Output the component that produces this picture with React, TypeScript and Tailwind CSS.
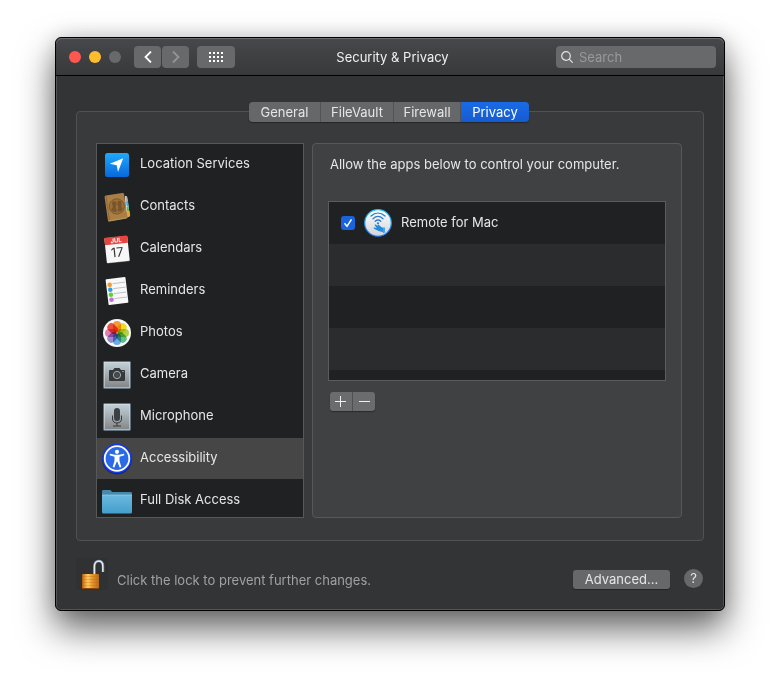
import { useState } from "react";
import type { ReactNode } from "react";

const tabs = [
  { label: "General", width: "w-[72px]" },
  { label: "FileVault", width: "w-[73px]" },
  { label: "Firewall", width: "w-[67px]" },
  { label: "Privacy", width: "w-[68px]" },
];

const petals = [
  { angle: 0, color: "#f9a03c" },
  { angle: 45, color: "#f5e12a" },
  { angle: 90, color: "#b4d84a" },
  { angle: 135, color: "#5fc48d" },
  { angle: 180, color: "#6fb0ea" },
  { angle: 225, color: "#9c8fd6" },
  { angle: 270, color: "#e583bb" },
  { angle: 315, color: "#f4523f" },
];

function Icon({ children }: { children: ReactNode }) {
  return (
    <svg viewBox="0 0 32 32" className="size-8 shrink-0" aria-hidden="true">
      {children}
    </svg>
  );
}

function LocationIcon() {
  return (
    <Icon>
      <defs>
        <linearGradient id="location" x2="0" y2="1">
          <stop stopColor="#20a9fc" />
          <stop offset="1" stopColor="#0868dc" />
        </linearGradient>
      </defs>
      <rect x="4" y="4" width="24" height="24" rx="2.5" fill="url(#location)" />
      <path d="M22.2 9.3 17 23l-1.300-6.800-6.900-1.500z" fill="#fff" />
    </Icon>
  );
}

function ContactsIcon() {
  return (
    <Icon>
      <path d="m24 5 2 .4L29 25l-4 2z" fill="#f2f2ee" />
      <path d="m24.5 6 1.6-.1.6 4-1.8.6z" fill="#aab4bd" />
      <path d="m25 10.5 2-.4.7 5-2 .5z" fill="#45a9e8" />
      <path d="m25.5 15.7 2-.5.7 5-2 .6z" fill="#56bd5a" />
      <path d="m25.5 21 2.8-.7.9 4.8-3.4 1.2z" fill="#eda32a" />
      <path d="M3.6 6.2c0-.8.4-1.4 1.2-1.6L21.2 2c1-.1 1.7.3 1.9 1.2L26.5 26c.1.8-.3 1.5-1.1 1.6L8.6 30.600c-.9.1-1.5-.4-1.700-1.300z" fill="#a97f46" />
      <path d="m5 5 3.600 25" stroke="#8b6532" strokeWidth=".8" />
      <path d="m7.500 30 17.800-3" stroke="#c39a5c" strokeWidth=".8" />
      <circle cx="15.800" cy="15.400" r="7.600" fill="#9a703a" stroke="#7d592b" strokeWidth="1" />
      <path d="M12 10.500c2.200-.9 3.600.5 3.400 2.700-.1 1.500-.8 2-.7 3 .2 1.400 1.500 1.800 1 3.700-.2 1-2 1.200-4.300.3-1.300-.6-1.600-2-.4-3 .9-.7 1-1.300.5-2.500-.5-1.400-.9-3.500.5-4.200zM17.500 10c2-.6 3.300.5 3.200 2.500 0 1.400-.6 2-.4 2.800.2 1.200 1.400 1.600 1.100 3-.2 1-1.700 2-3.900 2.200-1 0-1.100-1.600-.4-2.800.5-1 .2-1.900-.3-3.200-.7-1.700-.7-4 .7-4.500z" fill="#7a552a" />
    </Icon>
  );
}

function CalendarIcon() {
  return (
    <Icon>
      <g transform="rotate(-6 16 16)">
        <path d="M5 27h22v2.500H5z" fill="#777" />
        <rect x="4.500" y="4" width="23" height="25" rx="1" fill="#f7f7f7" />
        <path d="M5.500 3.500h21a1 1 0 0 1 1 1V11h-23V4.500a1 1 0 0 1 1-1z" fill="#e6443f" />
        <text x="16" y="9.500" textAnchor="middle" fill="#fff" className="font-['Inter'] text-[6px] font-bold">JUL</text>
        <text x="16" y="24" textAnchor="middle" fill="#333" className="font-['Inter'] text-[13px]">17</text>
      </g>
    </Icon>
  );
}

function RemindersIcon() {
  return (
    <Icon>
      <g transform="rotate(-7 16 16)">
        <rect x="6" y="3" width="20" height="26" rx="1" fill="#f8f8f8" />
        <path d="M12.500 8.200H25M12.500 13.200H25M12.500 18.200H25M12.500 23.200H25" stroke="#b8b8b8" strokeWidth=".8" />
        <circle cx="9.500" cy="9" r="2.300" fill="#f79a28" />
        <circle cx="9.500" cy="14" r="2.300" fill="#2c9fe8" />
        <circle cx="9.500" cy="19" r="2.300" fill="#5fcf3e" />
        <circle cx="9.500" cy="24" r="2.300" fill="#bd74d4" />
      </g>
    </Icon>
  );
}

function PhotosIcon() {
  return (
    <Icon>
      <circle cx="16" cy="16" r="14" fill="#f8f8f8" />
      {petals.map((p) => (
        <rect
          key={p.angle}
          x="12"
          y="4"
          width="8"
          height="11.500"
          rx="4"
          fill={p.color}
          transform={`rotate(${p.angle} 16 16)`}
          className="mix-blend-multiply"
        />
      ))}
    </Icon>
  );
}

function SteelTile({ id, children }: { id: string; children: ReactNode }) {
  return (
    <Icon>
      <defs>
        <linearGradient id={id} x2="0" y2="1">
          <stop stopColor="#c3d3db" />
          <stop offset="1" stopColor="#828384" />
        </linearGradient>
      </defs>
      <rect x="2.500" y="2.500" width="27" height="27" rx="1" fill={`url(#${id})`} stroke="#607280" />
      <rect x="3.500" y="3.500" width="25" height="25" fill="none" stroke="#dce4e8" strokeOpacity=".5" />
      {children}
    </Icon>
  );
}

function CameraIcon() {
  return (
    <SteelTile id="camera">
      <path d="M9 11h3l1.500-2h5l1.500 2h3a1 1 0 0 1 1 1v9a1 1 0 0 1-1 1H9a1 1 0 0 1-1-1v-9a1 1 0 0 1 1-1z" fill="#35393b" />
      <circle cx="16" cy="16" r="3.600" fill="#3b3f41" stroke="#a9b0b3" strokeWidth="1" />
      <circle cx="16" cy="16" r="2" fill="#484d50" />
      <path d="M21 12.500h2" stroke="#9ba3a7" strokeWidth=".8" />
    </SteelTile>
  );
}

function MicrophoneIcon() {
  return (
    <SteelTile id="microphone">
      <rect x="13" y="7" width="6" height="13" rx="3" fill="#3d4042" />
      <path d="M11.500 14.500V18c0 2.500 2 4 4.500 4s4.500-1.500 4.500-4v-3.500M16 22v3M12 25h8" fill="none" stroke="#35383a" strokeWidth="1" />
    </SteelTile>
  );
}

function AccessibilityIcon() {
  return (
    <Icon>
      <circle cx="16" cy="16.500" r="15" fill="#0c1a70" opacity=".7" />
      <circle cx="16" cy="15.500" r="14.700" fill="#1238ee" />
      <circle cx="16" cy="15.500" r="12.300" fill="#2a6ae6" stroke="#fff" strokeWidth="1.800" />
      <circle cx="16" cy="8.800" r="2.100" fill="#fff" />
      <path d="m9 10.800 4.700 1h4.600l4.700-1 .4 1.500-4.900 1.500v4l1.800 6.100-1.600.5-2.500-5.800h-.4l-2.500 5.800-1.600-.5 1.800-6.100v-4l-4.900-1.500z" fill="#fff" />
    </Icon>
  );
}

function FolderIcon() {
  return (
    <Icon>
      <defs>
        <linearGradient id="folder" x2="0" y2="1">
          <stop stopColor="#6bb9df" />
          <stop offset="1" stopColor="#449ecb" />
        </linearGradient>
      </defs>
      <path d="M1 6.500C1 5.500 1.500 5 2.500 5h6.200c1.600 0 1.600 2 3.300 2h17.500c1 0 1.500.5 1.500 1.500V12H1z" fill="#4689aa" />
      <path d="M1 10h30v17a1.500 1.500 0 0 1-1.500 1.500h-27A1.500 1.500 0 0 1 1 27z" fill="url(#folder)" />
      <path d="M1 10h30" stroke="#91d3ee" strokeWidth=".7" />
    </Icon>
  );
}

function RemoteIcon() {
  return (
    <Icon>
      <defs>
        <linearGradient id="remote-ring" x2="0" y2="1">
          <stop stopColor="#20c5f0" />
          <stop offset="1" stopColor="#1768e4" />
        </linearGradient>
        <linearGradient id="remote-face" x2="0" y2="1">
          <stop stopColor="#fff" />
          <stop offset="1" stopColor="#d0d3d8" />
        </linearGradient>
      </defs>
      <circle cx="16" cy="16" r="13.300" fill="url(#remote-face)" stroke="url(#remote-ring)" strokeWidth="1.200" />
      <path d="M9 9c4.300-3.800 9.700-3.800 14 0M11 11.700c3.100-2.800 6.900-2.800 10 0M13.200 14.200c1.800-1.600 3.800-1.600 5.600 0" fill="none" stroke="#287fd2" strokeWidth="1.300" strokeLinecap="round" />
      <circle cx="16" cy="16.300" r="1.100" fill="#287fd2" />
      <path d="m16.200 17.600 3.800 3 1.200.2 1 2.500v3l-1.800-1.200-3.800-1-4.600-2.400c-.8-.5-.2-1.300.6-1.100l2.200.5-2-2.600c-.3-1 .5-1.300 1.200-.7l1.500 1z" fill="#258adb" />
      <path d="M21 20.500h2V26l-2-1z" fill="#46a5e4" />
    </Icon>
  );
}

function LockIcon() {
  return (
    <svg viewBox="0 0 32 32" className="size-8 shrink-0" aria-hidden="true">
      <defs>
        <linearGradient id="brass">
          <stop stopColor="#a8570f" />
          <stop offset=".12" stopColor="#e08a1f" />
          <stop offset=".35" stopColor="#ffcb62" />
          <stop offset=".6" stopColor="#e8962b" />
          <stop offset="1" stopColor="#b76a17" />
        </linearGradient>
      </defs>
      <rect width="32" height="32" rx="4" fill="#303133" />
      <path d="M18.500 16V8.500c0-3.300 1.700-5.500 4.300-5.500s4.200 2.200 4.200 5.500V14" fill="none" stroke="#8297a5" strokeWidth="2.400" />
      <path d="M18.300 16V8.500c0-3.300 1.900-5.300 4.500-5.300s4 2 4 5.300V14" fill="none" stroke="#edf3f6" strokeWidth="1.200" />
      <rect x="6" y="16" width="17" height="15" rx="1" fill="url(#brass)" />
      <path d="M6 18.500h17M6 21.500h17M6 24.500h17M6 27.500h17" stroke="#a75d13" strokeOpacity=".35" strokeWidth=".8" />
      <path d="M6 30.500h17" stroke="#8a450c" />
    </svg>
  );
}

const services = [
  { label: "Location Services", icon: <LocationIcon /> },
  { label: "Contacts", icon: <ContactsIcon /> },
  { label: "Calendars", icon: <CalendarIcon /> },
  { label: "Reminders", icon: <RemindersIcon /> },
  { label: "Photos", icon: <PhotosIcon /> },
  { label: "Camera", icon: <CameraIcon /> },
  { label: "Microphone", icon: <MicrophoneIcon /> },
  { label: "Accessibility", icon: <AccessibilityIcon /> },
  { label: "Full Disk Access", icon: <FolderIcon /> },
];

function TitleBar() {
  return (
    <header className="grid h-[38px] grid-cols-[1fr_auto_1fr] items-start rounded-t-md border-b border-black bg-linear-to-b from-[#47484b] to-[#38393b] pt-2 pr-2 pl-[13px] shadow-[inset_0_1px_#6b6c6e]">
      <div className="flex h-[22px] items-center">
        <div className="flex gap-2">
          <button type="button" aria-label="Close" className="size-3 rounded-full bg-[#ff5750]" />
          <button type="button" aria-label="Minimize" className="size-3 rounded-full bg-[#ffbd2e]" />
          <button type="button" aria-label="Zoom" disabled className="size-3 rounded-full bg-[#69696b]" />
        </div>
        <div className="ml-[13px] flex gap-px">
          <button type="button" aria-label="Back" className="grid h-[22px] w-[27px] place-items-center rounded-sm bg-[#68696b] text-white">
            <svg viewBox="0 0 8 12" className="h-3 w-2" fill="none" stroke="currentColor" strokeWidth="1.800">
              <path d="M7 .5 1.500 6 7 11.500" />
            </svg>
          </button>
          <button type="button" aria-label="Forward" disabled className="grid h-[22px] w-[27px] place-items-center rounded-sm bg-[#68696b] text-[#949597]">
            <svg viewBox="0 0 8 12" className="h-3 w-2" fill="none" stroke="currentColor" strokeWidth="1.800">
              <path d="M1 .5 6.500 6 1 11.500" />
            </svg>
          </button>
        </div>
        <button type="button" aria-label="Show All" className="ml-2 grid h-[22px] w-[38px] place-items-center rounded-sm bg-[#68696b]">
          <svg viewBox="0 0 14 10" className="h-2.5 w-3.5" fill="#fff">
            {[0, 4, 8].map((y) =>
              [0, 4, 8, 12].map((x) => <rect key={`${x}-${y}`} x={x} y={y} width="2" height="2" />),
            )}
          </svg>
        </button>
      </div>
      <h1 className="leading-[22px] text-[#f0f0f0]">Security &amp; Privacy</h1>
      <div className="flex h-[22px] w-40 items-center gap-1.5 justify-self-end rounded-sm bg-[#68696b] pl-[5px]">
        <label htmlFor="search" aria-label="Search">
          <svg viewBox="0 0 12 12" className="size-3 shrink-0" fill="none" stroke="#e4e4e5" strokeWidth="1.200">
            <circle cx="5" cy="5" r="4.300" />
            <path d="m8.200 8.200 3.500 3.500" />
          </svg>
        </label>
        <input
          id="search"
          type="search"
          placeholder="Search"
          className="h-5 w-full min-w-0 bg-transparent text-[#e8e8e9] outline-none placeholder:text-[#98999b]"
        />
      </div>
    </header>
  );
}

function AppList() {
  const [allowed, setAllowed] = useState(true);
  return (
    <ul className="mt-[27px] h-[180px] overflow-hidden border border-[#5b5c5e] bg-[#202123]">
      <li className="h-[42px]">
        <label className="flex h-full items-center pl-3">
          <span className="grid size-3.5 place-items-center">
            <input
              type="checkbox"
              checked={allowed}
              onChange={(e) => setAllowed(e.target.checked)}
              className="col-start-1 row-start-1 size-3.5 appearance-none rounded-[3px] bg-[#6a6b6d] checked:bg-[#1964dc]"
            />
            {allowed && (
              <svg viewBox="0 0 14 14" className="pointer-events-none col-start-1 row-start-1 size-3.5" fill="none" stroke="#fff" strokeWidth="1.500">
                <path d="m3.500 7.300 2.500 3 4.500-7" />
              </svg>
            )}
          </span>
          <span className="ml-[7px]">
            <RemoteIcon />
          </span>
          <span className="ml-[7px] pb-0.5">Remote for Mac</span>
        </label>
      </li>
      <li className="h-[42px] bg-[#2b2c2e]" />
      <li className="h-[42px]" />
      <li className="h-[42px] bg-[#2b2c2e]" />
    </ul>
  );
}

export default function App() {
  const [tab, setTab] = useState("Privacy");
  const [service, setService] = useState("Accessibility");

  return (
    <div className="bg-white px-[55px] pt-[37px] pb-[73px] font-['Inter','Liberation_Sans',sans-serif] text-[13px] leading-5 text-[#e6e6e7]">
      <main className="rounded-md border border-black bg-[#333436] shadow-[inset_0_0_0_1px_#535456,0_18px_36px_rgba(0,0,0,0.6),0_0_20px_rgba(0,0,0,0.15)]">
        <TitleBar />

        <div className="px-5 pt-[35px] pb-5">
          <section className="rounded-sm border border-[#515254] bg-[#393a3c] pr-[21px] pb-[22px] pl-[19px]">
            <div role="tablist" className="-mt-2.5 flex justify-center">
              <div className="flex divide-x divide-[#525355] overflow-hidden rounded-sm shadow-[0_1px_1px_rgba(0,0,0,0.35)]">
                {tabs.map((t) => (
                  <button
                    key={t.label}
                    type="button"
                    role="tab"
                    aria-selected={t.label === tab}
                    onClick={() => setTab(t.label)}
                    className={`h-5 ${t.width} ${t.label === tab ? "bg-linear-to-b from-[#1a6be6] to-[#155bd0] text-white" : "bg-[#666769]"}`}
                  >
                    {t.label}
                  </button>
                ))}
              </div>
            </div>

            <div className="mt-[21px] flex gap-2">
              <nav aria-label="Services" className="h-[375px] w-52 shrink-0 overflow-hidden border border-[#57585a] bg-[#202123]">
                <ul>
                  {services.map((s) => (
                    <li key={s.label} className="h-[42px]">
                      <button
                        type="button"
                        onClick={() => setService(s.label)}
                        className={`flex h-[41px] w-full items-center gap-[7px] pt-px pl-1 text-left ${s.label === service ? "bg-[#464646]" : ""}`}
                      >
                        {s.icon}
                        <span className="pb-1">{s.label}</span>
                      </button>
                    </li>
                  ))}
                </ul>
              </nav>

              <div className="min-w-0 flex-1 rounded-sm border border-[#57585a] bg-[#404143] px-[15px] pt-2.5">
                <p className="pl-0.5">Allow the apps below to control your computer.</p>
                <AppList />
                <div className="mt-[11px] flex px-0.5">
                  <div className="flex divide-x divide-[#4f5052] overflow-hidden rounded-[3px] bg-[#6b6c6e] shadow-[0_1px_1px_rgba(0,0,0,0.35)]">
                    <button type="button" aria-label="Add app" className="grid h-[19px] w-[23px] place-items-center">
                      <svg viewBox="0 0 12 11" className="h-[11px] w-3" stroke="#f0f0f0">
                        <path d="M0 5.500h11M5.500 0v11" />
                      </svg>
                    </button>
                    <button type="button" aria-label="Remove app" className="grid h-[19px] w-[22px] place-items-center">
                      <svg viewBox="0 0 12 11" className="h-[11px] w-3" stroke="#f0f0f0">
                        <path d="M1 5.500h11" />
                      </svg>
                    </button>
                  </div>
                </div>
              </div>
            </div>
          </section>

          <footer className="mt-[17px] flex items-start">
            <button type="button" aria-label="Lock">
              <LockIcon />
            </button>
            <p className="mt-3 ml-[9px] text-[#a0a1a2]">Click the lock to prevent further changes.</p>
            <button type="button" className="mt-3 ml-auto h-[19px] w-[97px] rounded-[3px] bg-[#67686a] leading-[19px] shadow-[0_1px_1px_rgba(0,0,0,0.3)]">
              Advanced...
            </button>
            <button type="button" aria-label="Help" className="mt-[11px] mr-px ml-3.5 size-[19px] rounded-full bg-[#67686a] leading-[19px]">
              ?
            </button>
          </footer>
        </div>
      </main>
    </div>
  );
}
